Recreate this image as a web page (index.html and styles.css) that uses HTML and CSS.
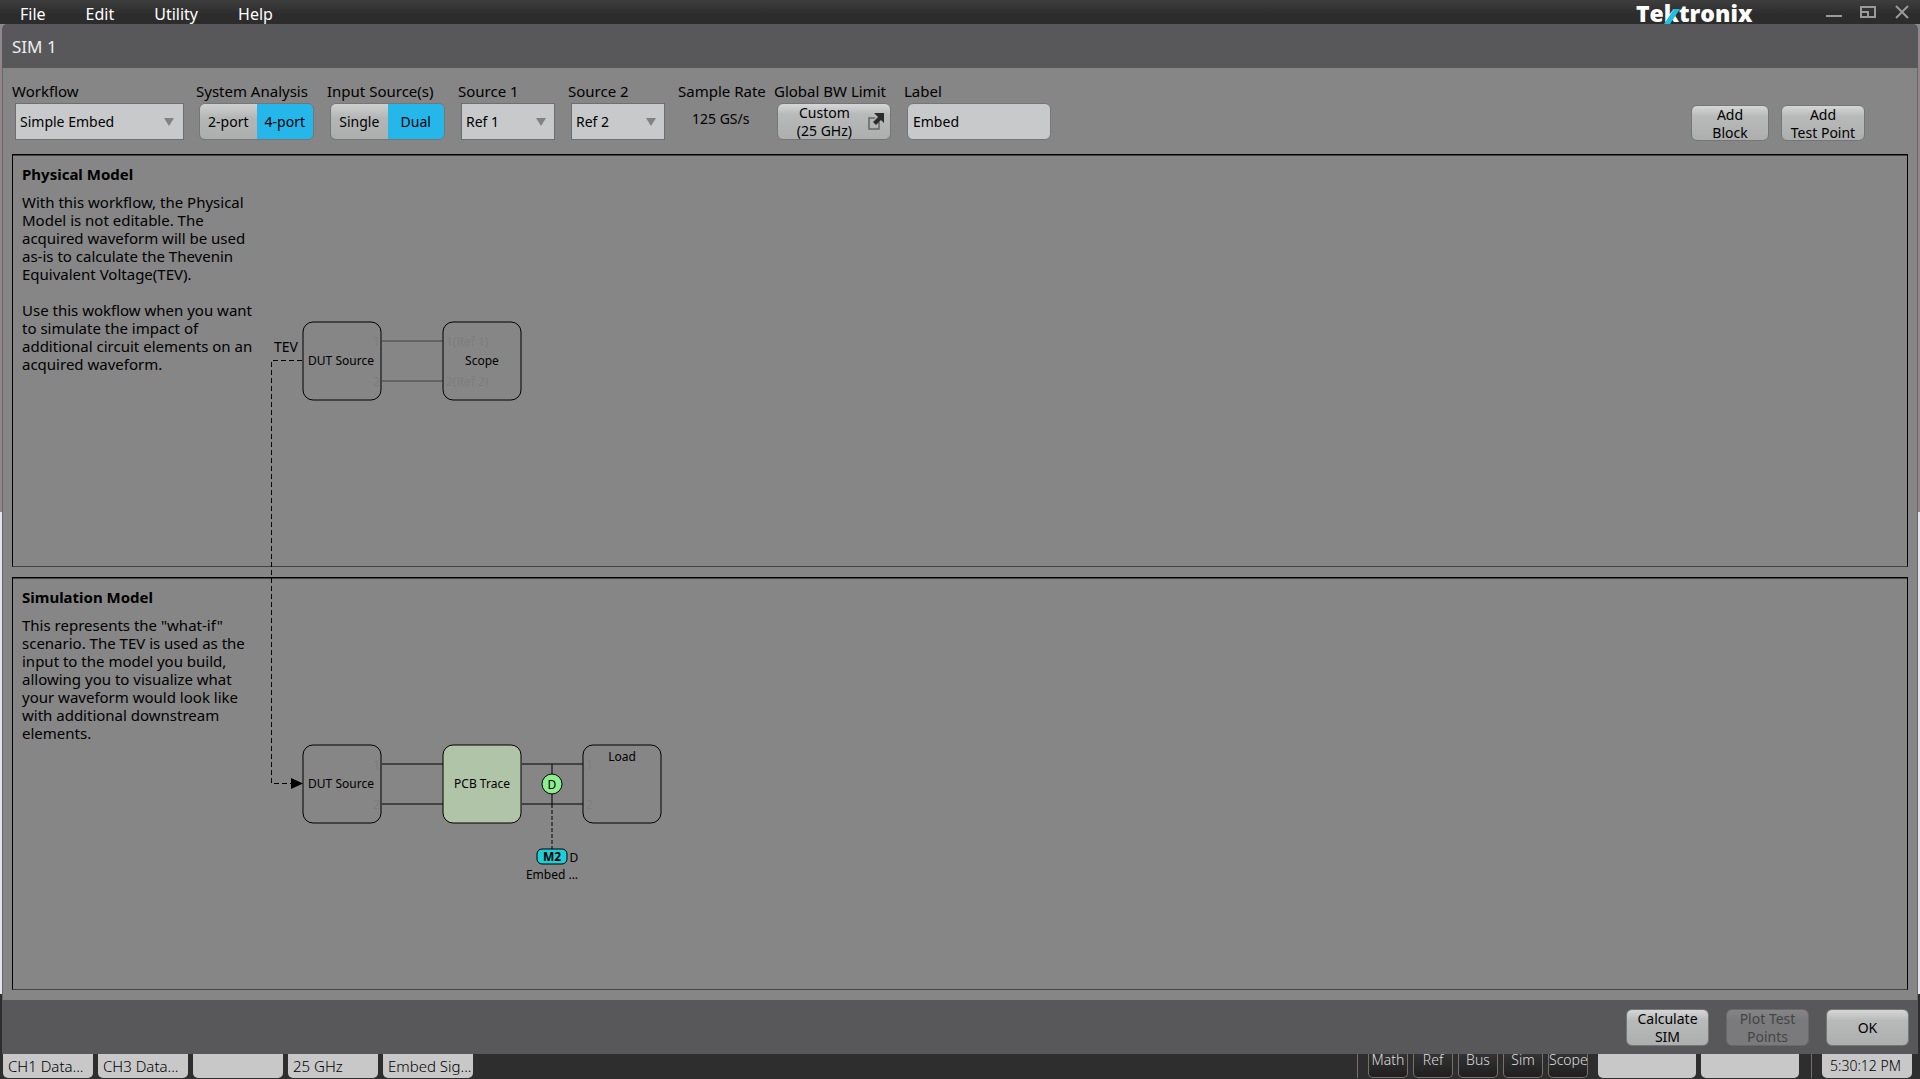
FILE: index.html
```
<!DOCTYPE html>
<html lang="en">
<head>
    <meta charset="UTF-8">
    <meta name="viewport" content="width=device-width, initial-scale=1.0">
    <title>SIM 1</title>
    <link rel="stylesheet" href="styles.css">
</head>
<body>
    <header class="menubar">
        <nav class="menu">
            <button class="menu-item">File</button>
            <button class="menu-item">Edit</button>
            <button class="menu-item">Utility</button>
            <button class="menu-item">Help</button>
        </nav>
        <svg class="logo" width="130" height="24" viewBox="0 0 130 24">
            <text x="0" y="22">Tektronix</text>
            <path class="logo-bar" d="M38 9h6L34 24h-6z"/>
        </svg>
        <div class="window-buttons">
            <button class="win-btn" aria-label="Minimize">
                <svg width="16" height="16" viewBox="0 0 16 16"><path d="M0 12h16"/></svg>
            </button>
            <button class="win-btn" aria-label="Restore">
                <svg width="16" height="16" viewBox="0 0 16 16"><path d="M1 3h14v10H1zM1 8h7v5"/></svg>
            </button>
            <button class="win-btn" aria-label="Close">
                <svg width="16" height="16" viewBox="0 0 16 16"><path d="M2 2l12 12M14 2L2 14"/></svg>
            </button>
        </div>
    </header>

    <main class="dialog">
        <h1 class="dialog-title">SIM 1</h1>

        <div class="dialog-body">
            <form class="toolbar">
                <div class="field workflow">
                    <label for="workflow">Workflow</label>
                    <select id="workflow"><option>Simple Embed</option></select>
                </div>
                <fieldset class="field analysis">
                    <legend>System Analysis</legend>
                    <div class="segment">
                        <input type="radio" name="ports" id="port2"><label for="port2">2-port</label>
                        <input type="radio" name="ports" id="port4" checked><label for="port4">4-port</label>
                    </div>
                </fieldset>
                <fieldset class="field analysis">
                    <legend>Input Source(s)</legend>
                    <div class="segment">
                        <input type="radio" name="inputs" id="single"><label for="single">Single</label>
                        <input type="radio" name="inputs" id="dual" checked><label for="dual">Dual</label>
                    </div>
                </fieldset>
                <div class="field source">
                    <label for="source1">Source 1</label>
                    <select id="source1"><option>Ref 1</option></select>
                </div>
                <div class="field source">
                    <label for="source2">Source 2</label>
                    <select id="source2"><option>Ref 2</option></select>
                </div>
                <div class="field rate">
                    <label for="rate">Sample Rate</label>
                    <output id="rate">125 GS/s</output>
                </div>
                <div class="field bandwidth">
                    <label for="bandwidth">Global BW Limit</label>
                    <button type="button" class="btn btn-popup" id="bandwidth">
                        <span>Custom<br>(25 GHz)</span>
                        <svg width="16" height="17" viewBox="0 0 16 17">
                            <path class="popup-box" d="M7 5H1v11h10V9"/>
                            <path class="popup-arrow" d="M6 0h10v10l-3-3-5 5-3-3 5-5z"/>
                        </svg>
                    </button>
                </div>
                <div class="field">
                    <label for="name">Label</label>
                    <input type="text" id="name" value="Embed">
                </div>
                <div class="actions">
                    <button type="button" class="btn">Add<br>Block</button>
                    <button type="button" class="btn">Add<br>Test Point</button>
                </div>
            </form>

            <div class="models">
                <section class="model">
                    <h2>Physical Model</h2>
                    <p>With this workflow, the Physical<br>Model is not editable. The<br>acquired waveform will be used<br>as-is to calculate the Thevenin<br>Equivalent Voltage(TEV).</p>
                    <p>Use this wokflow when you want<br>to simulate the impact of<br>additional circuit elements on an<br>acquired waveform.</p>
                </section>
                <section class="model">
                    <h2>Simulation Model</h2>
                    <p>This represents the "what-if"<br>scenario. The TEV is used as the<br>input to the model you build,<br>allowing you to visualize what<br>your waveform would look like<br>with additional downstream<br>elements.</p>
                </section>

                <svg class="diagram" width="680" height="740" viewBox="0 0 680 740">
                    <!-- TEV link between the two models -->
                    <path class="link" d="M290 206.500H259.500V629.500H280"/>
                    <path d="M279 624v11l12-5.500z"/>
                    <text class="tev" x="262" y="198">TEV</text>

                    <!-- physical model -->
                    <path class="wire faint" d="M370 187h61M370 227h61"/>
                    <rect class="block" x="291" y="168" width="78" height="78" rx="10"/>
                    <rect class="block" x="431" y="168" width="78" height="78" rx="10"/>
                    <text class="pin" x="361" y="192">1</text>
                    <text class="pin" x="361" y="232">2</text>
                    <text class="pin" x="434" y="192">1(Ref 1)</text>
                    <text class="pin" x="434" y="232">2(Ref 2)</text>
                    <text class="node-name" x="329" y="211">DUT Source</text>
                    <text class="node-name" x="470" y="211">Scope</text>

                    <!-- simulation model -->
                    <path class="wire" d="M370 610h61M370 650h61M510 610h61M510 650h61M540 610v40"/>
                    <path class="wire dashed" d="M540 650v45"/>
                    <rect class="block" x="291" y="591" width="78" height="78" rx="10"/>
                    <rect class="block trace" x="431" y="591" width="78" height="78" rx="10"/>
                    <rect class="block" x="571" y="591" width="78" height="78" rx="10"/>
                    <text class="pin" x="361" y="615">1</text>
                    <text class="pin" x="361" y="655">2</text>
                    <text class="pin" x="574" y="615">1</text>
                    <text class="pin" x="574" y="655">2</text>
                    <text class="node-name" x="329" y="634">DUT Source</text>
                    <text class="node-name" x="470" y="634">PCB Trace</text>
                    <text class="node-name" x="610" y="607">Load</text>

                    <!-- test point -->
                    <circle class="point" cx="540" cy="630" r="10"/>
                    <text class="node-name" x="540" y="635">D</text>
                    <rect class="badge" x="525" y="695" width="30" height="15" rx="5"/>
                    <text class="node-name strong" x="540" y="707">M2</text>
                    <text class="node-name" x="562" y="708">D</text>
                    <text class="node-name" x="540" y="725">Embed ...</text>
                </svg>
            </div>
        </div>

        <footer class="dialog-footer">
            <button class="btn">Calculate<br>SIM</button>
            <button class="btn" disabled>Plot Test<br>Points</button>
            <button class="btn">OK</button>
        </footer>
    </main>

    <footer class="taskbar">
        <div class="tile">CH1 Data...</div>
        <div class="tile">CH3 Data...</div>
        <div class="tile"></div>
        <div class="tile">25 GHz</div>
        <div class="tile">Embed Sig...</div>
        <div class="task-right">
            <button class="add-btn">Math</button>
            <button class="add-btn">Ref</button>
            <button class="add-btn">Bus</button>
            <button class="add-btn">Sim</button>
            <button class="add-btn">Scope</button>
        </div>
        <div class="tile wide"></div>
        <div class="tile wide"></div>
        <div class="clock"><time class="tile">5:30:12 PM</time></div>
    </footer>
</body>
</html>
```
FILE: styles.css
```
* {
    box-sizing: border-box;
}
body {
    margin: 0;
    height: 100vh;
    display: flex;
    flex-direction: column;
    overflow: hidden;
    background: #2e2e2e;
    color: #000;
    font: 15px/18px "Noto Sans", sans-serif;
}
button, input, select {
    font: inherit;
    color: inherit;
}
button {
    padding: 0;
    border: 0;
    background: none;
}

/* menu bar */
.menubar {
    height: 24px;
    flex: none;
    display: flex;
    align-items: flex-start;
    padding: 0 10px 0 20px;
    background: linear-gradient(#3e3e3e, #2c2c2c 60%);
}
.menu {
    display: flex;
    gap: 40px;
    flex: 1;
}
.menu-item {
    padding-top: 4px;
    color: #fff;
    font-size: 16px;
    line-height: 20px;
}
.logo text {
    font: 800 23px "Open Sans", sans-serif;
    fill: #fff;
}
.logo-bar {
    fill: #1fbfe0;
}
.window-buttons {
    display: flex;
    gap: 18px;
    margin: 4px 0 0 60px;
}
.win-btn {
    height: 16px;
}
.win-btn svg {
    display: block;
    fill: none;
    stroke: #9a9a9c;
    stroke-width: 2;
}

/* dialog */
.dialog {
    flex: 1;
    min-height: 0;
    display: flex;
    flex-direction: column;
    padding: 0 2px;
    background: linear-gradient(#8f8789 488px, #e4e4ea 488px, #e4e4ea 970px, #2e2e2e 970px);
}
.dialog-title {
    margin: 0;
    padding: 1px 10px 0;
    background: #58585a;
    border-radius: 5px 5px 0 0;
    color: #eee;
    font-size: 17px;
    font-weight: 400;
    line-height: 43px;
}
.dialog-body {
    flex: 1;
    display: flex;
    flex-direction: column;
    padding: 13px 9px 10px;
    border: solid #6b6668;
    border-width: 0 1px;
    background: #868686;
}
.toolbar {
    display: flex;
    height: 73px;
    flex: none;
}
.field {
    flex: none;
    margin: 0;
    padding: 0;
    border: 0;
}
.field > label, .field > legend {
    display: block;
    padding: 0;
    height: 22px;
    line-height: 20px;
}
.workflow {
    width: 184px;
}
.analysis {
    width: 131px;
}
.source {
    width: 110px;
}
.rate {
    width: 96px;
}
.rate output {
    display: block;
    padding: 7px 14px;
    font-size: 14px;
    white-space: nowrap;
}
.bandwidth {
    width: 130px;
}
.field select, .field input[type="text"], .segment, .btn-popup {
    margin-left: 3px;
    font-size: 14px;
}
.field select {
    appearance: none;
    width: 94px;
    height: 37px;
    padding: 0 4px;
    border: 1px solid #6c6e70;
    border-radius: 0;
    background: #c8c9cb;
}
.field:has(select) {
    position: relative;
}
/* drop-down arrow */
.field:has(select)::after {
    content: "";
    position: absolute;
    top: 37px;
    left: 78px;
    border: solid transparent;
    border-width: 8px 5px 0;
    border-top-color: #818383;
    pointer-events: none;
}
.workflow select {
    width: 169px;
}
.field.workflow::after {
    left: 152px;
}
.segment {
    display: flex;
    width: 115px;
    height: 37px;
    border: 1px solid #747678;
    border-radius: 6px;
    overflow: hidden;
}
.segment input {
    position: absolute;
    opacity: 0;
}
.segment label {
    flex: 1 1 0;
    text-align: center;
    line-height: 36px;
    background: linear-gradient(#cfcfcf, #b4b6b6 40%, #adafaf);
}
.segment input:checked + label {
    background: #25b6ea;
}
.field input[type="text"] {
    width: 144px;
    height: 37px;
    padding: 0 5px;
    border: 1px solid #747678;
    border-radius: 6px;
    background: #c8c9cb;
}
.btn {
    min-width: 78px;
    height: 36px;
    border: 1px solid #747678;
    border-radius: 6px;
    background: linear-gradient(#d6d6d6, #b8baba 30%, #adafaf);
    font-size: 14px;
    text-align: center;
}
.btn:disabled {
    background: linear-gradient(#858587, #7a7a7c 30%);
    border-color: #69696b;
    color: #444;
}
.btn-popup {
    display: flex;
    justify-content: flex-end;
    align-items: center;
    gap: 16px;
    width: 114px;
    height: 37px;
    padding-right: 6px;
}
.popup-box {
    fill: none;
    stroke: #666;
    stroke-width: 1.5;
}
.popup-arrow {
    fill: #2c2c2c;
}
.actions {
    display: flex;
    gap: 12px;
    margin: 24px 43px 0 auto;
}
.actions .btn + .btn {
    width: 84px;
}

/* models */
.models {
    flex: 1;
    position: relative;
    display: grid;
    grid-template-rows: 1fr 1fr;
    gap: 10px;
}
.model {
    padding: 10px 9px;
    border: 1px solid #000;
    border-bottom-color: #444;
    box-shadow: inset 0 1px #444;
}
.model h2 {
    margin: 0 0 10px;
    font-size: 15px;
    line-height: 18px;
}
.model p {
    margin: 0 0 18px;
}
.diagram {
    position: absolute;
    top: 0;
    left: 0;
}
.tev {
    font-size: 14px;
}
.link {
    fill: none;
    stroke: #000;
    stroke-dasharray: 5 3;
}
.wire {
    fill: none;
    stroke: #000;
}
.faint {
    opacity: .5;
}
.dashed {
    stroke-dasharray: 4 2;
}
.block {
    fill: #868686;
    stroke: #000;
}
.trace {
    fill: #b0c4a8;
}
.point {
    fill: #8cee8c;
    stroke: #000;
}
.badge {
    fill: #1fced6;
    stroke: #000;
}
.node-name {
    font-size: 12px;
    text-anchor: middle;
}
.pin {
    font-size: 12px;
    fill: #7e7e7e;
}
.strong {
    font-weight: 700;
}

.dialog-footer {
    height: 54px;
    flex: none;
    display: flex;
    justify-content: flex-end;
    gap: 17px;
    padding: 9px;
    background: #58585a;
}
.dialog-footer .btn {
    width: 83px;
    height: 37px;
}

/* task bar */
.taskbar {
    height: 25px;
    flex: none;
    display: flex;
    gap: 5px;
    padding: 0 8px 1px 3px;
}
.tile {
    width: 90px;
    height: 24px;
    padding-left: 5px;
    border-radius: 0 0 5px 5px;
    background: #c8c8c8;
    font-weight: 300;
    line-height: 24px;
    white-space: nowrap;
}
.tile.wide {
    width: 98px;
}
.task-right {
    display: flex;
    gap: 5px;
    margin-left: auto;
    margin-right: 5px;
    padding-left: 10px;
    border-left: 1px solid #77706c;
}
.add-btn {
    width: 40px;
    height: 24px;
    border: 1px solid #77706c;
    border-top: 0;
    border-radius: 0 0 5px 5px;
    background: linear-gradient(#333, #1f1f1f);
    color: #ddd;
    font-size: 14px;
    font-weight: 300;
    line-height: 12px;
    padding-bottom: 12px;
}
.clock {
    margin-left: 7px;
    padding-left: 10px;
    border-left: 1px solid #77706c;
}
.clock .tile {
    display: block;
    padding-left: 8px;
    font-size: 14px;
}
```
